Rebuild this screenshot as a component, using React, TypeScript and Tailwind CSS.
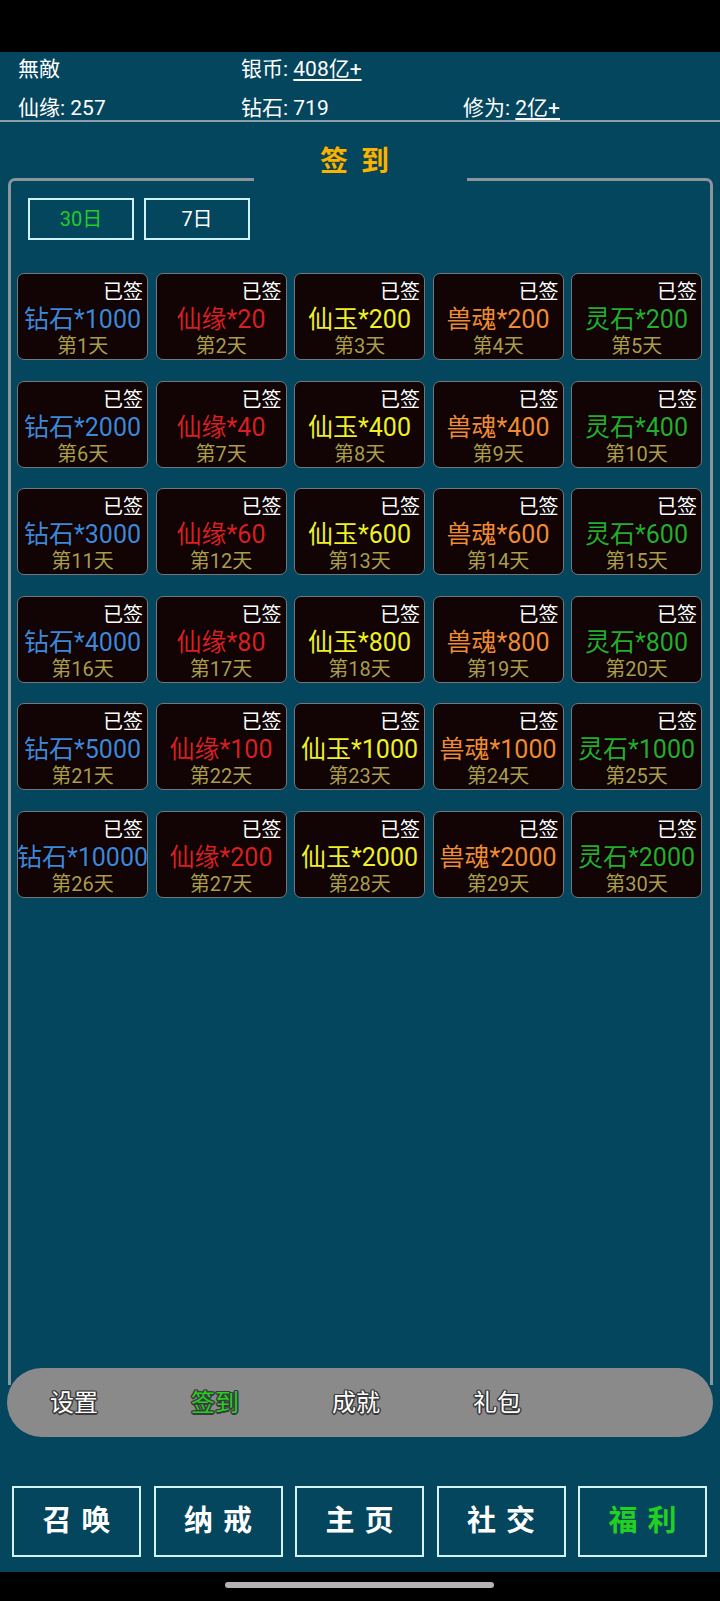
import React from "react";

type Reward = { name: string; color: string; values: number[] };

const rewards: Reward[] = [
  { name: "钻石", color: "text-[#3f87d8]", values: [1000, 2000, 3000, 4000, 5000, 10000] },
  { name: "仙缘", color: "text-[#d91f22]", values: [20, 40, 60, 80, 100, 200] },
  { name: "仙玉", color: "text-[#f0f024]", values: [200, 400, 600, 800, 1000, 2000] },
  { name: "兽魂", color: "text-[#f08a34]", values: [200, 400, 600, 800, 1000, 2000] },
  { name: "灵石", color: "text-[#25ad2c]", values: [200, 400, 600, 800, 1000, 2000] },
];

const cells = Array.from({ length: 30 }, (_, i) => {
  const row = Math.floor(i / 5);
  const col = i % 5;
  const r = rewards[col];
  return { day: i + 1, label: `${r.name}*${r.values[row]}`, color: r.color };
});

const FONT = "[font-family:Roboto,'Noto_Sans_CJK_SC',sans-serif]";

function DayCard({ day, label, color }: { day: number; label: string; color: string }) {
  return (
    <div className="h-[87px] rounded-[7px] border-[1.5px] border-[#74777a] bg-[#120405] overflow-hidden flex flex-col pt-[5px]">
      <div className="h-[26px] leading-[26px] text-[20px] text-white text-right pr-[4px] [text-shadow:0_0_1px_#000]">
        已签
      </div>
      <div
        className={`h-[27px] leading-[30px] text-[25px] whitespace-nowrap flex justify-center ${color} [text-shadow:0_0_1px_#000,0_0_1px_#000]`}
      >
        {label}
      </div>
      <div className="h-[26px] leading-[28px] text-[20px] text-center text-[#ab9d4c] [text-shadow:0_0_1px_#000]">
        第{day}天
      </div>
    </div>
  );
}

const tabOutline =
  "[text-shadow:1.5px_0_0_#3a3a3a,-1.5px_0_0_#3a3a3a,0_1.5px_0_#3a3a3a,0_-1.5px_0_#3a3a3a,1px_1px_0_#3a3a3a,-1px_-1px_0_#3a3a3a,1px_-1px_0_#3a3a3a,-1px_1px_0_#3a3a3a]";

export default function App() {
  return (
    <div className={`w-[720px] h-[1601px] bg-[#04465d] flex flex-col ${FONT}`}>
      {/* status bar */}
      <div className="h-[52px] bg-black shrink-0" />

      {/* player stats */}
      <div className="pt-[5px] border-b-2 border-[#8aa0a9] text-white text-[21px] flex flex-col gap-[15px] h-[70px]">
        <div className="flex h-[24px] leading-[24px]">
          <span className="w-[241px] pl-[18px]">無敵</span>
          <span>
            银币: <span className="underline underline-offset-[3px]">408亿+</span>
          </span>
        </div>
        <div className="flex h-[24px] leading-[24px]">
          <span className="w-[241px] pl-[18px]">仙缘: 257</span>
          <span className="w-[222px]">钻石: 719</span>
          <span>
            修为: <span className="underline underline-offset-[3px]">2亿+</span>
          </span>
        </div>
      </div>

      {/* sign-in panel */}
      <div className="relative mt-[56px] ml-[8px] w-[705px] h-[1207px] border-[3px] border-b-0 border-[#8b959b] rounded-t-[7px] flex flex-col">
        <div className="absolute -top-[39px] left-[243px] w-[213px] h-[40px] bg-[#04465d] flex items-center justify-center gap-[13px] pr-[12px] text-[28px] font-bold text-[#f6b404] [text-shadow:0_0_1px_#5a3a00]">
          <span>签</span>
          <span>到</span>
        </div>

        <div className="flex gap-[10px] pt-[17px] pl-[17px]">
          <div className="w-[106px] h-[42px] border-2 border-[#cdf2f8] flex items-center justify-center text-[20px] text-[#22cc22]">
            30日
          </div>
          <div className="w-[106px] h-[42px] border-2 border-[#cdf2f8] flex items-center justify-center text-[20px] text-white">
            7日
          </div>
        </div>

        <div className="mt-[33px] pl-[6px] pr-[8px] grid grid-cols-5 gap-x-[7.5px] gap-y-[20.6px]">
          {cells.map((c) => (
            <DayCard key={c.day} {...c} />
          ))}
        </div>
      </div>

      {/* panel tabs */}
      <div className="-mt-[17px] mx-[7px] w-[706px] h-[69px] rounded-full bg-[#8a8a8a] flex items-center pl-[43px] gap-[93px] text-[24px]">
        <span className={`text-white ${tabOutline}`}>设置</span>
        <span className={`text-[#22d022] ${tabOutline}`}>签到</span>
        <span className={`text-white ${tabOutline}`}>成就</span>
        <span className={`text-white ${tabOutline}`}>礼包</span>
      </div>

      {/* main navigation */}
      <div className="mt-[49px] pl-[12px] flex gap-[12.5px]">
        {["召唤", "纳戒", "主页", "社交", "福利"].map((t, i) => (
          <div
            key={t}
            className={`w-[129px] h-[71px] border-2 border-[#d3f3f8] flex items-center justify-center gap-[10px] text-[29px] font-bold ${
              i === 4 ? "text-[#22d022]" : "text-white"
            }`}
          >
            <span>{t[0]}</span>
            <span>{t[1]}</span>
          </div>
        ))}
      </div>

      {/* gesture bar */}
      <div className="mt-[15px] flex-1 bg-black flex justify-start pl-[225px] pt-[10px]">
        <div className="w-[269px] h-[6px] rounded-full bg-[#b3b3b3]" />
      </div>
    </div>
  );
}
